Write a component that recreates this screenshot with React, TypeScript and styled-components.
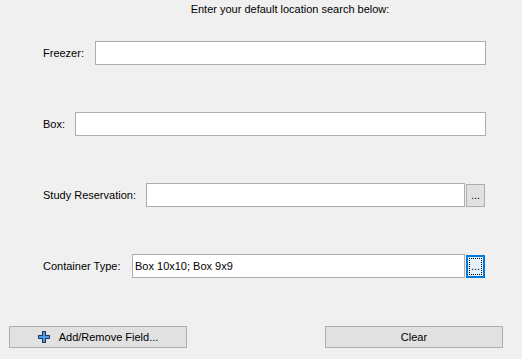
import React from "react";
import styled, { createGlobalStyle } from "styled-components";

const Global = createGlobalStyle`
  html, body { margin: 0; padding: 0; background: #f0f0f0; }
  body { font-family: "Liberation Sans", Arial, sans-serif; font-size: 11px; color: #000; }
`;

const Page = styled.div`
  width: 522px;
  height: 359px;
  box-sizing: border-box;
  padding-top: 3px;
  display: flex;
  flex-direction: column;
  background: #f0f0f0;
`;

const Title = styled.div`
  margin-left: 58px;
  text-align: center;
  line-height: 13px;
  height: 13px;
`;

const Fields = styled.div`
  margin-top: 25px;
  padding: 0 36px 0 43px;
  display: flex;
  flex-direction: column;
  gap: 47px;
`;

const Row = styled.div`
  display: flex;
  align-items: center;
  height: 24px;
`;

const Label = styled.div<{ $w: number }>`
  width: ${(p) => p.$w}px;
  flex: none;
  line-height: 13px;
  white-space: nowrap;
`;

const Input = styled.div`
  flex: 1;
  height: 24px;
  box-sizing: border-box;
  border: 1px solid #adadad;
  background: #fff;
  padding: 0 2px 0 2px;
  display: flex;
  align-items: center;
  line-height: 13px;
`;

const Ellipsis = styled.div<{ $focused?: boolean }>`
  position: relative;
  flex: none;
  width: 19px;
  height: 23px;
  margin: 1px 1px 0 1px;
  box-sizing: border-box;
  border: ${(p) => (p.$focused ? "2px solid #0078d7" : "1px solid #adadad")};
  background: ${(p) => (p.$focused ? "#e5f1fb" : "#e1e1e1")};
  display: flex;
  align-items: center;
  justify-content: center;
  line-height: 11px;
  font-size: 11px;
  padding-bottom: 1px;
  &::after {
    content: "";
    display: ${(p) => (p.$focused ? "block" : "none")};
    position: absolute;
    inset: 1px;
    border: 1px dotted #000;
  }
`;

const Footer = styled.div`
  margin-top: 48px;
  padding: 0 19px 0 9px;
  display: flex;
  justify-content: space-between;
`;

const Button = styled.div`
  width: 178px;
  height: 22px;
  box-sizing: border-box;
  border: 1px solid #adadad;
  background: #e1e1e1;
  display: flex;
  align-items: center;
  justify-content: center;
  gap: 9px;
  line-height: 13px;
`;

const PlusIcon = () => (
  <svg width="12" height="12" viewBox="0 0 12 12">
    <path
      d="M4.5 0.5h3v4h4v3h-4v4h-3v-4h-4v-3h4z"
      fill="#4d9be6"
      stroke="#1b2f5e"
      strokeWidth="1"
    />
  </svg>
);

export default function App() {
  return (
    <>
      <Global />
      <Page>
        <Title>Enter your default location search below:</Title>
        <Fields>
          <Row>
            <Label $w={52}>Freezer:</Label>
            <Input />
          </Row>
          <Row>
            <Label $w={32}>Box:</Label>
            <Input />
          </Row>
          <Row>
            <Label $w={103}>Study Reservation:</Label>
            <Input />
            <Ellipsis>...</Ellipsis>
          </Row>
          <Row>
            <Label $w={89}>Container Type:</Label>
            <Input>Box 10x10; Box 9x9</Input>
            <Ellipsis $focused>...</Ellipsis>
          </Row>
        </Fields>
        <Footer>
          <Button>
            <PlusIcon />
            <span>Add/Remove Field...</span>
          </Button>
          <Button>Clear</Button>
        </Footer>
      </Page>
    </>
  );
}
